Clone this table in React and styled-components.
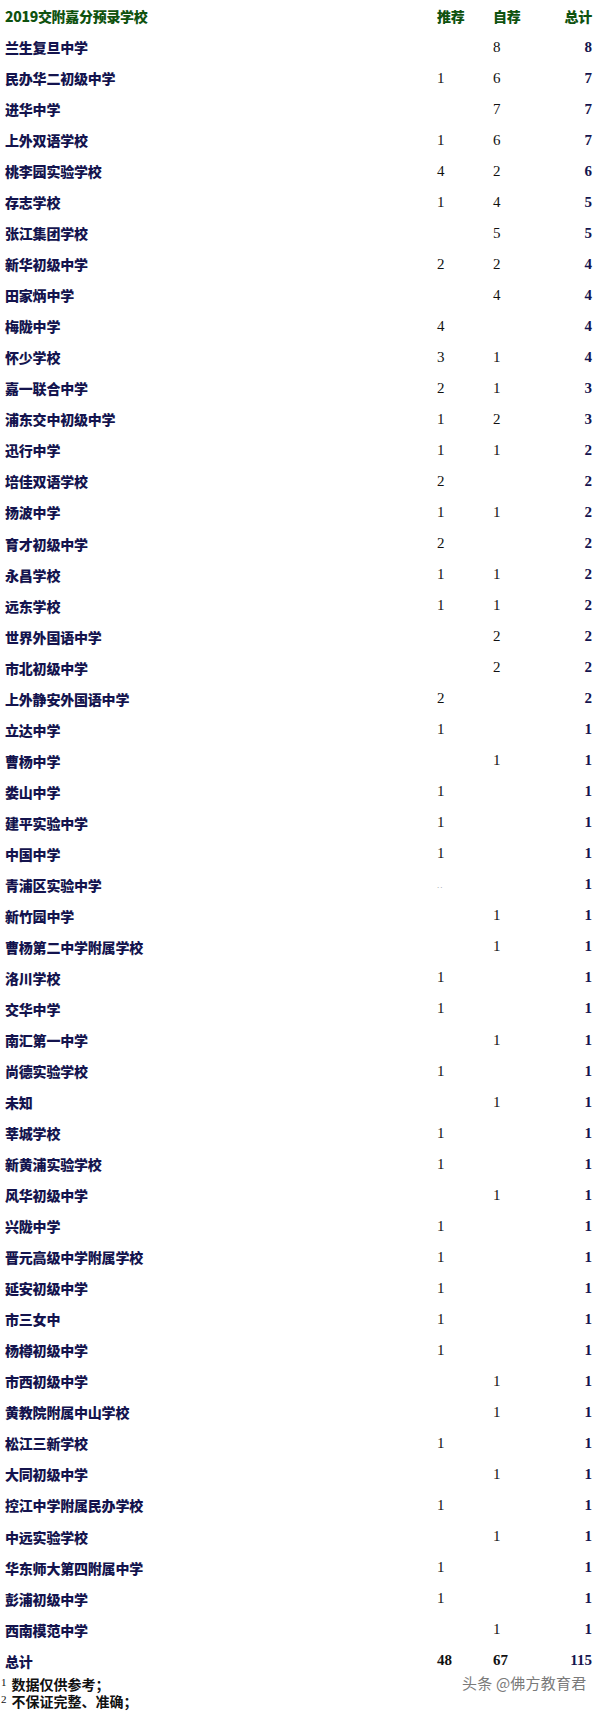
import React from "react";
import styled, { createGlobalStyle } from "styled-components";

const GlobalStyle = createGlobalStyle`
  body {
    margin: 0;
    background: #ffffff;
  }
`;

const ROWS = [
  ["兰生复旦中学", "", "8", "8"],
  ["民办华二初级中学", "1", "6", "7"],
  ["进华中学", "", "7", "7"],
  ["上外双语学校", "1", "6", "7"],
  ["桃李园实验学校", "4", "2", "6"],
  ["存志学校", "1", "4", "5"],
  ["张江集团学校", "", "5", "5"],
  ["新华初级中学", "2", "2", "4"],
  ["田家炳中学", "", "4", "4"],
  ["梅陇中学", "4", "", "4"],
  ["怀少学校", "3", "1", "4"],
  ["嘉一联合中学", "2", "1", "3"],
  ["浦东交中初级中学", "1", "2", "3"],
  ["迅行中学", "1", "1", "2"],
  ["培佳双语学校", "2", "", "2"],
  ["扬波中学", "1", "1", "2"],
  ["育才初级中学", "2", "", "2"],
  ["永昌学校", "1", "1", "2"],
  ["远东学校", "1", "1", "2"],
  ["世界外国语中学", "", "2", "2"],
  ["市北初级中学", "", "2", "2"],
  ["上外静安外国语中学", "2", "", "2"],
  ["立达中学", "1", "", "1"],
  ["曹杨中学", "", "1", "1"],
  ["娄山中学", "1", "", "1"],
  ["建平实验中学", "1", "", "1"],
  ["中国中学", "1", "", "1"],
  ["青浦区实验中学", "..", "", "1"],
  ["新竹园中学", "", "1", "1"],
  ["曹杨第二中学附属学校", "", "1", "1"],
  ["洛川学校", "1", "", "1"],
  ["交华中学", "1", "", "1"],
  ["南汇第一中学", "", "1", "1"],
  ["尚德实验学校", "1", "", "1"],
  ["未知", "", "1", "1"],
  ["莘城学校", "1", "", "1"],
  ["新黄浦实验学校", "1", "", "1"],
  ["风华初级中学", "", "1", "1"],
  ["兴陇中学", "1", "", "1"],
  ["晋元高级中学附属学校", "1", "", "1"],
  ["延安初级中学", "1", "", "1"],
  ["市三女中", "1", "", "1"],
  ["杨樽初级中学", "1", "", "1"],
  ["市西初级中学", "", "1", "1"],
  ["黄教院附属中山学校", "", "1", "1"],
  ["松江三新学校", "1", "", "1"],
  ["大同初级中学", "", "1", "1"],
  ["控江中学附属民办学校", "1", "", "1"],
  ["中远实验学校", "", "1", "1"],
  ["华东师大第四附属中学", "1", "", "1"],
  ["彭浦初级中学", "1", "", "1"],
  ["西南模范中学", "", "1", "1"],
];

const CJK = `"Noto Sans CJK SC", "Liberation Serif", serif`;
const NUM = `"Liberation Serif", "Noto Sans CJK SC", serif`;

const Page = styled.div`
  position: relative;
  width: 598px;
  height: 1713px;
  padding: 0 6px 0 5px;
  box-sizing: border-box;
  overflow: hidden;
`;

const Table = styled.div`
  display: grid;
  grid-template-columns: 1fr 56px 56px 43px;
`;

const Row = styled.div`
  display: contents;
`;

const Cell = styled.div`
  height: ${(p) => p.$h || 31.04}px;
  display: flex;
  align-items: center;
  justify-content: ${(p) => (p.$right ? "flex-end" : "flex-start")};
`;

const HeadText = styled.span`
  font-family: ${CJK};
  font-weight: 900;
  font-size: 14px;
  color: #0f520f;
  letter-spacing: -0.3px;
`;

const Name = styled.span`
  font-family: ${CJK};
  font-weight: 900;
  font-size: 14px;
  color: #14144e;
  letter-spacing: -0.2px;
`;

const Num = styled.span`
  font-family: ${NUM};
  font-size: 15px;
  color: #111111;
`;

const Faint = styled.span`
  font-family: ${NUM};
  font-size: 9px;
  color: #9a9aa0;
  letter-spacing: 1px;
`;

const TotalNum = styled.span`
  font-family: ${NUM};
  font-weight: 700;
  font-size: 15px;
  color: ${(p) => (p.$navy ? "#14144e" : "#111111")};
`;

const Notes = styled.div`
  display: flex;
  flex-direction: column;
`;

const Note = styled.div`
  font-family: ${CJK};
  font-weight: 700;
  font-size: 14px;
  line-height: 17px;
  color: #111111;
  display: flex;
  align-items: center;
  margin-left: -4px;
`;

const Sup = styled.sup`
  font-family: ${NUM};
  font-weight: 400;
  font-size: 11px;
  margin-right: 5px;
  position: relative;
  top: -2px;
`;

const Watermark = styled.div`
  position: absolute;
  left: 462px;
  top: 1672px;
  font-family: "Noto Sans CJK SC", sans-serif;
  font-size: 15px;
  color: #7a7a7a;
  letter-spacing: 0.2px;
`;

const renderReferral = (v) => {
  if (v === "..") return <Faint>..</Faint>;
  return <Num>{v}</Num>;
};

export default function App() {
  return (
    <>
      <GlobalStyle />
      <Page>
        <Table>
          <Row>
            <Cell $h={31.5}><HeadText>2019交附嘉分预录学校</HeadText></Cell>
            <Cell $h={31.5}><HeadText>推荐</HeadText></Cell>
            <Cell $h={31.5}><HeadText>自荐</HeadText></Cell>
            <Cell $h={31.5} $right><HeadText>总计</HeadText></Cell>
          </Row>
          {ROWS.map(([name, rec, self, total]) => (
            <Row key={name}>
              <Cell><Name>{name}</Name></Cell>
              <Cell>{renderReferral(rec)}</Cell>
              <Cell><Num>{self}</Num></Cell>
              <Cell $right><TotalNum $navy>{total}</TotalNum></Cell>
            </Row>
          ))}
          <Row>
            <Cell><Name>总计</Name></Cell>
            <Cell><TotalNum>48</TotalNum></Cell>
            <Cell><TotalNum>67</TotalNum></Cell>
            <Cell $right><TotalNum $navy>115</TotalNum></Cell>
          </Row>
        </Table>
        <Notes>
          <Note><Sup>1</Sup>数据仅供参考；</Note>
          <Note><Sup>2</Sup>不保证完整、准确；</Note>
        </Notes>
        <Watermark>头条 @佛方教育君</Watermark>
      </Page>
    </>
  );
}
